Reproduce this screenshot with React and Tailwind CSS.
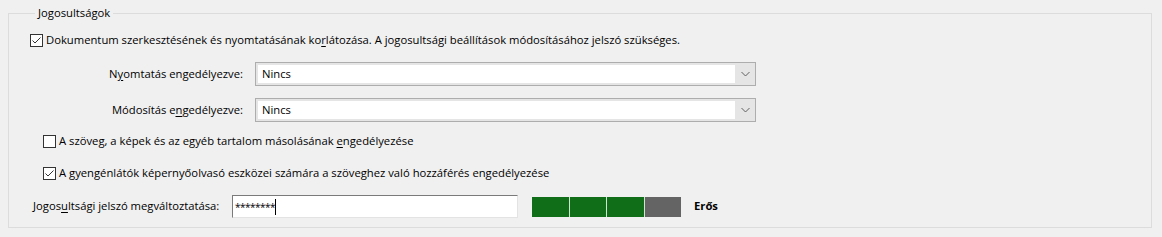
import React from 'react';

const font = { fontFamily: '"Open Sans", "Noto Sans", sans-serif' };

const CheckBox = ({ checked }) => (
  <span className="inline-flex items-center justify-center w-[13px] h-[13px] border border-[#333333] bg-white shrink-0">
    {checked && (
      <svg width="11" height="11" viewBox="0 0 11 11">
        <polyline points="1.5,5.5 4,8 9.5,2.5" fill="none" stroke="#333333" strokeWidth="1" />
      </svg>
    )}
  </span>
);

const Select = ({ value }) => (
  <div className="flex w-[501px] h-[24px] border border-[#adadad] bg-[#e5e5e5]">
    <div className="flex-1 bg-white my-[2px] ml-[2px] flex items-center pl-[4px] text-black">{value}</div>
    <div className="w-[20px] flex items-center justify-center">
      <svg width="9" height="6" viewBox="0 0 9 6">
        <polyline points="0.5,1 4.5,5 8.5,1" fill="none" stroke="#606060" strokeWidth="1" />
      </svg>
    </div>
  </div>
);

const U = ({ children }) => <span className="underline underline-offset-2">{children}</span>;

const App = () => {
  return (
    <div className="w-full h-[237px] bg-[#f0f0f0] pt-[5px] px-[8px] text-[11.25px] text-black" style={font}>
      <fieldset className="border border-[#dcdcdc] h-[223px] w-[1144px] pl-[21px]">
        <legend className="ml-[5px] px-[3px] leading-[16px]">Jogosultságok</legend>

        {/* main restriction checkbox */}
        <div className="flex items-center h-[16px] mt-[11px]">
          <CheckBox checked />
          <span className="ml-[3px]">
            Dokumentum szerkesztésének és nyomtatásának ko<U>r</U>látozása. A jogosultsági beállítások módosításához jelszó szükséges.
          </span>
        </div>

        <div className="flex items-center mt-[14px]">
          <div className="w-[213px] text-right">
            N<U>y</U>omtatás engedélyezve:
          </div>
          <div className="ml-[12px]"><Select value="Nincs" /></div>
        </div>

        <div className="flex items-center mt-[12px]">
          <div className="w-[213px] text-right">
            Módosítás e<U>n</U>gedélyezve:
          </div>
          <div className="ml-[12px]"><Select value="Nincs" /></div>
        </div>

        <div className="flex items-center h-[16px] mt-[11px] ml-[13px]">
          <CheckBox />
          <span className="ml-[3px]">
            A szöveg, a képek és az egyéb tartalom másolásának <U>e</U>ngedélyezése
          </span>
        </div>

        <div className="flex items-center h-[16px] mt-[16px] ml-[13px]">
          <CheckBox checked />
          <span className="ml-[3px]">
            A <U>g</U>yengénlátók képernyőolvasó eszközei számára a szöveghez való hozzáférés engedélyezése
          </span>
        </div>

        <div className="flex items-center mt-[14px]">
          <div className="w-[202px] pl-[3px]">
            Jogos<U>u</U>ltsági jelszó megváltoztatása:
          </div>
          <div className="w-[286px] h-[23px] bg-white border border-[#e3e3e3] border-t-[#7a7a7a] border-l-[#7a7a7a] flex items-center pl-[2px]">
            <span className="text-[10px] leading-none tracking-[-0.5px]">********</span>
            <span className="w-[1px] h-[16px] bg-black"></span>
          </div>
          <div className="ml-[14px] flex h-[20px] w-[149px] bg-[#cfe6cf] gap-[1px]">
            <div className="flex-1 bg-[#0f6e17]"></div>
            <div className="flex-1 bg-[#0f6e17]"></div>
            <div className="flex-1 bg-[#0f6e17]"></div>
            <div className="flex-1 bg-[#646464]"></div>
          </div>
          <div className="ml-[13px] font-bold">Erős</div>
        </div>
      </fieldset>
    </div>
  );
};

export default App;
